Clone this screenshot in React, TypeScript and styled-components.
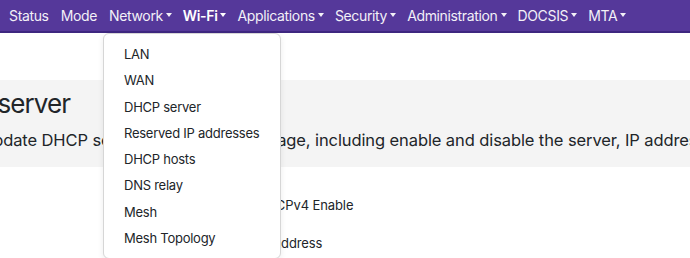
import React from "react";
import styled, { createGlobalStyle } from "styled-components";

const GlobalStyle = createGlobalStyle`
  html, body {
    margin: 0;
    padding: 0;
    background: #fff;
    overflow: hidden;
  }
  body {
    font-family: Inter, "Noto Sans", sans-serif;
    color: #212529;
  }
`;

const Page = styled.div`
  width: 690px;
  height: 258px;
  position: relative;
  overflow: hidden;
`;

const Navbar = styled.ul`
  display: flex;
  align-items: center;
  margin: 0;
  padding: 0 0 0 4px;
  height: 31px;
  background-color: #55389a;
  border-bottom: 2px solid #3e2780;
  list-style: none;
`;

const NavItem = styled.li`
  position: relative;
`;

const NavLink = styled.a<{ $active?: boolean; $menu?: boolean }>`
  display: flex;
  align-items: center;
  padding: 0 ${(p) => (p.$menu ? 6 : 7)}px 0 5px;
  color: #fff;
  font-size: 14px;
  font-weight: ${(p) => (p.$active ? 600 : 400)};
  text-decoration: none;
  white-space: nowrap;
  opacity: ${(p) => (p.$active ? 1 : 0.93)};
  letter-spacing: -0.35px;
`;

const Caret = styled.span`
  display: inline-block;
  margin-left: 3px;
  margin-top: -2px;
  border-top: 4px solid #fff;
  border-left: 3.5px solid transparent;
  border-right: 3.5px solid transparent;
`;

const Menu = styled.ul`
  position: absolute;
  top: 33px;
  left: 103px;
  width: 176px;
  margin: 0;
  padding: 8px 0 6px;
  background: #fff;
  border: 1px solid #d6d6d6;
  border-radius: 6px;
  box-shadow: 0 2px 6px rgba(0, 0, 0, 0.08);
  list-style: none;
  z-index: 10;
`;

const MenuItem = styled.li`
  padding: 0 20px;
  height: 26.3px;
  line-height: 25px;
  font-size: 13px;
  color: #212529;
  white-space: nowrap;
  letter-spacing: -0.25px;
`;

const Header = styled.section`
  margin-top: 47px;
  height: 87px;
  background: #f4f4f4;
  padding-top: 7px;
  box-sizing: border-box;
`;

const Title = styled.h1`
  margin: 0 0 0 -79px;
  font-size: 26px;
  font-weight: 400;
  line-height: 34px;
  white-space: nowrap;
  letter-spacing: -0.9px;
`;

const Lead = styled.p`
  margin: 8px 0 0 -19px;
  font-size: 16.5px;
  line-height: 22px;
  white-space: nowrap;
  letter-spacing: -0.1px;
`;

const Form = styled.div`
  display: flex;
  flex-direction: column;
  gap: 20px;
  padding: 29px 0 0 257px;
`;

const Label = styled.div`
  font-size: 13px;
  line-height: 18px;
  white-space: nowrap;
  letter-spacing: -0.1px;
`;

const navItems = [
  { label: "Status" },
  { label: "Mode" },
  { label: "Network", menu: true },
  { label: "Wi-Fi", menu: true, active: true },
  { label: "Applications", menu: true },
  { label: "Security", menu: true },
  { label: "Administration", menu: true },
  { label: "DOCSIS", menu: true },
  { label: "MTA", menu: true },
];

const menuItems = [
  "LAN",
  "WAN",
  "DHCP server",
  "Reserved IP addresses",
  "DHCP hosts",
  "DNS relay",
  "Mesh",
  "Mesh Topology",
];

export default function App() {
  return (
    <Page>
      <GlobalStyle />
      <nav>
        <Navbar>
          {navItems.map((item) => (
            <NavItem key={item.label}>
              <NavLink $active={item.active} $menu={item.menu}>
                {item.label}
                {item.menu && <Caret />}
              </NavLink>
            </NavItem>
          ))}
        </Navbar>
      </nav>
      <Menu>
        {menuItems.map((m) => (
          <MenuItem key={m}>{m}</MenuItem>
        ))}
      </Menu>
      <Header>
        <Title>DHCP server</Title>
        <Lead>
          Update DHCP server settings on this page, including enable and disable the server, IP address range and lease time.
        </Lead>
      </Header>
      <Form>
        <Label>DHCPv4 Enable</Label>
        <Label>IP Address</Label>
      </Form>
    </Page>
  );
}
